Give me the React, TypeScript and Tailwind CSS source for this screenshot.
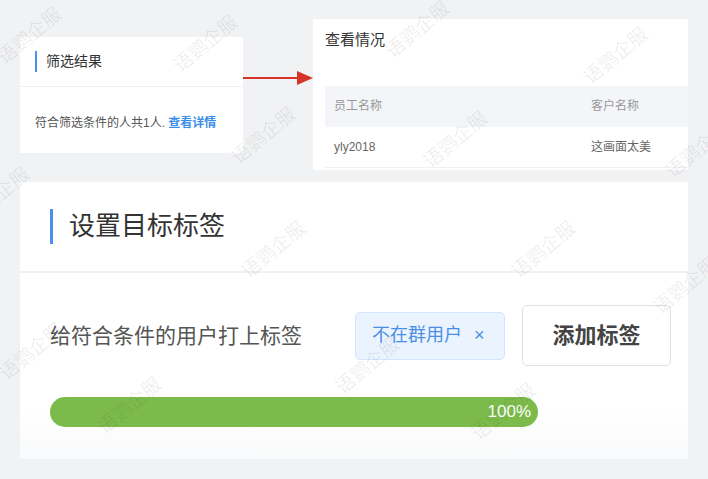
import React from "react";

const marks = [
  { x: -8, y: 22 },
  { x: 168, y: 30 },
  { x: 380, y: 16 },
  { x: 578, y: 42 },
  { x: 226, y: 122 },
  { x: 418, y: 126 },
  { x: 660, y: 136 },
  { x: -40, y: 182 },
  { x: 236, y: 236 },
  { x: 506, y: 236 },
  { x: 648, y: 272 },
  { x: -6, y: 338 },
  { x: 330, y: 352 },
  { x: 92, y: 392 },
  { x: 466, y: 398 },
];

function Watermarks() {
  return (
    <div className="pointer-events-none absolute inset-0 overflow-hidden">
      {marks.map((m, i) => (
        <span
          key={i}
          className="absolute origin-center -rotate-[40deg] whitespace-nowrap text-[19px] text-black/[0.08]"
          style={{ left: m.x, top: m.y }}
        >
          语鹦企服
        </span>
      ))}
    </div>
  );
}

function Arrow() {
  return (
    <svg width="70" height="14" viewBox="0 0 70 14" className="mt-[52px] shrink-0">
      <line x1="0" y1="7" x2="56" y2="7" stroke="#d6342a" strokeWidth="2" />
      <polygon points="54,0 70,7 54,14" fill="#d6342a" />
    </svg>
  );
}

export default function App() {
  return (
    <div
      className="relative h-[479px] w-[708px] overflow-hidden bg-[#f1f2f4]"
      style={{ fontFamily: '"Liberation Sans", "Noto Sans CJK SC", sans-serif' }}
    >
      <div className="flex items-start pl-[20px] pt-[19px]">
        <div className="mt-[18px] h-[116px] w-[223px] bg-white">
          <div className="flex h-[50px] items-center border-b border-[#f0f1f3] pl-[15px]">
            <div className="h-[21px] w-[2px] bg-[#4a8ff0]" />
            <span className="ml-[9px] text-[14px] text-[#333]">筛选结果</span>
          </div>
          <div className="pl-[15px] pt-[27px] text-[12px] text-[#555]">
            符合筛选条件的人共1人.{" "}
            <span className="font-bold text-[#3a8ee8]">查看详情</span>
          </div>
        </div>
        <Arrow />
        <div className="h-[151px] w-[375px] bg-white pl-[12px]">
          <div className="pt-[10px] text-[15px] text-[#333]">查看情况</div>
          <div className="mt-[34px] flex h-[41px] items-center bg-[#f3f5f8] text-[12px] text-[#999]">
            <span className="w-[266px] pl-[9px]">员工名称</span>
            <span>客户名称</span>
          </div>
          <div className="flex h-[41px] items-center border-b border-[#eef0f3] text-[12px] text-[#666]">
            <span className="w-[266px] pl-[9px]">yly2018</span>
            <span>这画面太美</span>
          </div>
        </div>
      </div>

      <div className="ml-[20px] mt-[12px] h-[277px] w-[668px] bg-gradient-to-b from-white from-80% to-[#f9fafb]">
        <div className="flex h-[91px] items-center border-b-2 border-[#eff1f4] pl-[30px]">
          <div className="h-[35px] w-[3px] bg-[#4a8ff0]" />
          <span className="ml-[16px] text-[26px] text-[#333]">设置目标标签</span>
        </div>
        <div className="flex items-center pl-[30px] pt-[32px]">
          <span className="w-[305px] text-[21px] text-[#555]">给符合条件的用户打上标签</span>
          <div className="flex h-[48px] w-[150px] items-center rounded-[5px] border border-[#d3e5fc] bg-[#eaf3fe] pl-[16px] text-[18px] text-[#4a8fe7]">
            不在群用户
            <span className="ml-[12px] text-[18px] font-light">×</span>
          </div>
          <div className="ml-[17px] flex h-[61px] w-[149px] items-center justify-center rounded-[5px] border border-[#dcdfe4] bg-white text-[22px] font-bold text-[#444]">
            添加标签
          </div>
        </div>
        <div className="ml-[30px] mt-[31px] flex h-[30px] w-[488px] items-center justify-end rounded-full bg-[#7cbb4b] pr-[7px] text-[17px] text-white">
          100%
        </div>
      </div>

      <Watermarks />
    </div>
  );
}
